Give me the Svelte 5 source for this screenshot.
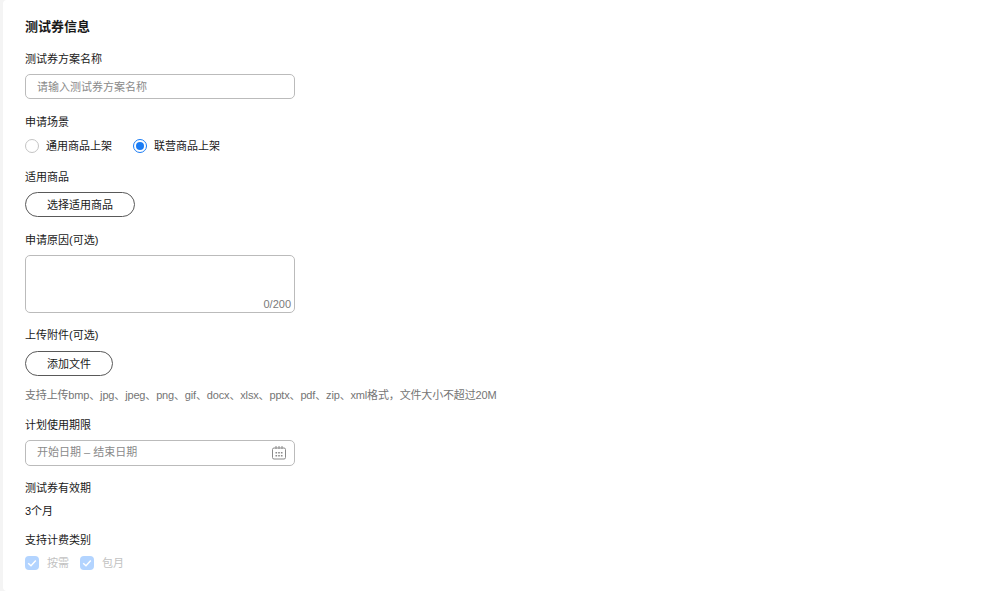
<script>
    const hint = '支持上传bmp、jpg、jpeg、png、gif、docx、xlsx、pptx、pdf、zip、xml格式，文件大小不超过20M'
    const scenes = [
        { label: '通用商品上架', checked: false },
        { label: '联营商品上架', checked: true }
    ]
    const billing = ['按需', '包月']
</script>

<div class="page">
    <div class="card">
        <h2 class="title">测试券信息</h2>

        <div class="item first">
            <div class="label">测试券方案名称</div>
            <div class="input">请输入测试券方案名称</div>
        </div>

        <div class="item scene">
            <div class="label">申请场景</div>
            <div class="radios">
                {#each scenes as s}
                    <div class="radio-item">
                        <span class="radio" class:checked={s.checked}></span>
                        <span>{s.label}</span>
                    </div>
                {/each}
            </div>
        </div>

        <div class="item goods">
            <div class="label">适用商品</div>
            <button class="btn wide">选择适用商品</button>
        </div>

        <div class="item reason">
            <div class="label">申请原因(可选)</div>
            <div class="textarea"><span class="count">0/200</span></div>
        </div>

        <div class="item upload">
            <div class="label">上传附件(可选)</div>
            <button class="btn">添加文件</button>
            <div class="hint">{hint}</div>
        </div>

        <div class="item period">
            <div class="label">计划使用期限</div>
            <div class="input date">
                <span class="date-text">开始日期 – 结束日期</span>
                <svg width="16" height="16" viewBox="0 0 16 16" fill="none">
                    <path d="M3 3h10a1.500 1.500 0 0 1 1.500 1.500v8A1.500 1.500 0 0 1 13 14H3a1.500 1.500 0 0 1-1.500-1.500v-8A1.500 1.500 0 0 1 3 3z" stroke="#8a8a8a" />
                    <path d="M5 1v3M8 1v3M11 1v3" stroke="#8a8a8a" />
                    <path d="M4.500 7h1.600v1.400H4.500zM7.200 7h1.600v1.400H7.200zM9.900 7h1.600v1.400H9.900zM4.500 10h1.600v1.400H4.500zM7.200 10h1.600v1.400H7.200zM9.900 10h1.600v1.400H9.900z" fill="#8a8a8a" />
                </svg>
            </div>
        </div>

        <div class="item validity">
            <div class="label">测试券有效期</div>
            <div class="value">3个月</div>
        </div>

        <div class="item billing">
            <div class="label">支持计费类别</div>
            <div class="checks">
                {#each billing as b}
                    <div class="check-item">
                        <span class="check">
                            <svg width="14" height="14" viewBox="0 0 14 14" fill="none">
                                <path d="M3.200 7.200 6 9.800l4.800-5.200" stroke="#fff" stroke-width="1.500" />
                            </svg>
                        </span>
                        <span>{b}</span>
                    </div>
                {/each}
            </div>
        </div>
    </div>
</div>

<style>
    :global(body) {
        margin: 0;
        background: #f4f4f4;
    }
    .page {
        height: 591px;
        overflow: hidden;
        padding-left: 3px;
        font-family: "Liberation Sans", "Noto Sans CJK SC", sans-serif;
        font-size: 11px;
        line-height: 18px;
        color: #191919;
    }
    .card {
        background: #fff;
        border-radius: 4px 0 0 4px;
        height: 591px;
        padding: 18px 0 0 22px;
        box-sizing: border-box;
    }
    .title {
        margin: 0;
        font-size: 13px;
        line-height: 18px;
        font-weight: 700;
    }
    .item.first { margin-top: 15px; }
    .item.scene { margin-top: 15px; }
    .item.goods { margin-top: 14px; }
    .item.reason { margin-top: 15px; }
    .item.upload { margin-top: 14px; }
    .item.period { margin-top: 13px; }
    .item.validity { margin-top: 14px; }
    .item.billing { margin-top: 12px; }
    .label {
        height: 18px;
        line-height: 16px;
    }
    .input {
        margin-top: 5px;
        width: 270px;
        height: 25px;
        box-sizing: border-box;
        border: 1px solid #bbb;
        border-radius: 5px;
        padding: 0 11px;
        line-height: 25px;
        color: #8a8a8a;
    }
    .date {
        height: 26px;
        display: flex;
        justify-content: space-between;
        align-items: center;
        padding-right: 7px;
    }
    .date-text {
        line-height: 22px;
        padding-bottom: 2px;
    }
    .radios {
        display: flex;
        gap: 21px;
        margin-top: 5px;
    }
    .radio-item {
        display: flex;
        align-items: center;
        gap: 7px;
    }
    .check-item {
        display: flex;
        align-items: center;
        gap: 8px;
    }
    .radio {
        width: 14px;
        height: 14px;
        box-sizing: border-box;
        border: 1px solid #c4c4c4;
        border-radius: 50%;
        position: relative;
    }
    .radio.checked {
        border-color: #1a7cf5;
    }
    .radio.checked::after {
        content: "";
        position: absolute;
        left: 2px;
        top: 2px;
        width: 8px;
        height: 8px;
        border-radius: 50%;
        background: #1a7cf5;
    }
    .btn {
        display: block;
        margin-top: 5px;
        width: 88px;
        height: 25px;
        padding: 0;
        background: #fff;
        border: 1px solid #595959;
        border-radius: 13px;
        font: inherit;
        color: #191919;
    }
    .btn.wide {
        width: 110px;
    }
    .upload .btn {
        margin-top: 6px;
    }
    .textarea {
        margin-top: 5px;
        width: 270px;
        height: 58px;
        box-sizing: border-box;
        border: 1px solid #bbb;
        border-radius: 5px;
        position: relative;
    }
    .count {
        position: absolute;
        right: 3px;
        bottom: 0;
        color: #7a7a7a;
        line-height: 16px;
    }
    .hint {
        margin-top: 10px;
        color: #757575;
        letter-spacing: -0.16px;
    }
    .value {
        margin-top: 4px;
    }
    .checks {
        display: flex;
        gap: 11px;
        margin-top: 4px;
        color: #c2c2c2;
    }
    .check {
        width: 14px;
        height: 14px;
        border-radius: 4px;
        background: #b3d4ff;
        display: block;
    }
    .check svg {
        display: block;
    }
</style>
